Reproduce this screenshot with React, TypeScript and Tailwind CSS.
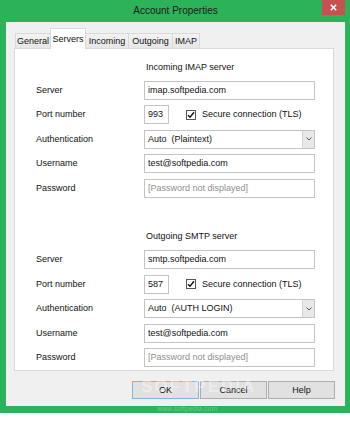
import React from "react";

const FONT = { fontFamily: '"Liberation Sans", "Noto Sans", Arial, sans-serif' };

function TextBox({ value, placeholder, w = "w-full" }: { value?: string; placeholder?: string; w?: string }) {
  return (
    <div className={`${w} h-[19px] bg-white border border-[#c2c4c8] flex items-center pl-[3px] text-[9px] leading-none`}>
      {value ? (
        <span className="text-[#111]">{value}</span>
      ) : (
        <span className="text-[#8f8f8f]">{placeholder}</span>
      )}
    </div>
  );
}

function Select({ value }: { value: string }) {
  return (
    <div className="w-full h-[19px] bg-white border border-[#c2c4c8] flex items-stretch text-[9px] leading-none">
      <div className="flex-1 flex items-center pl-[3px] text-[#111] whitespace-pre">{value}</div>
      <div className="w-[12px] border-l border-[#d4d4d4] bg-[#e8e8e8] flex items-center justify-center">
        <svg width="6" height="4" viewBox="0 0 6 4" fill="none" stroke="#555" strokeWidth="1">
          <path d="M0.5 0.5 3 3 5.5 0.5" />
        </svg>
      </div>
    </div>
  );
}

function Row({ label, children }: { label: string; children: React.ReactNode }) {
  return (
    <div className="grid grid-cols-[108px_171px] items-center h-[19px]">
      <span className="text-[9px] leading-none text-[#111]">{label}</span>
      <div className="flex items-center">{children}</div>
    </div>
  );
}

function ServerGroup({ title, host, port, auth }: { title: string; host: string; port: string; auth: string }) {
  return (
    <div className="flex flex-col gap-[5.5px]">
      <div className="grid grid-cols-[108px_171px] h-[16px] items-center">
        <span />
        <span className="pl-[2px] text-[9px] leading-none text-[#111]">{title}</span>
      </div>
      <Row label="Server">
        <TextBox value={host} />
      </Row>
      <Row label="Port number">
        <TextBox value={port} w="w-[25px]" />
        <div className="ml-[17px] w-[10px] h-[10px] border border-[#555] bg-white flex items-center justify-center">
          <svg width="8" height="8" viewBox="0 0 8 8" fill="none" stroke="#111" strokeWidth="1.4">
            <path d="M1 4.2 3 6.3 7 1.2" />
          </svg>
        </div>
        <span className="ml-[6px] text-[9px] leading-none text-[#111]">Secure connection (TLS)</span>
      </Row>
      <Row label="Authentication">
        <Select value={auth} />
      </Row>
      <Row label="Username">
        <TextBox value="test@softpedia.com" />
      </Row>
      <Row label="Password">
        <TextBox placeholder="[Password not displayed]" />
      </Row>
    </div>
  );
}

const TABS = [
  { name: "General", w: "w-[36px]" },
  { name: "Servers", w: "w-[36px]", active: true },
  { name: "Incoming", w: "w-[44px]" },
  { name: "Outgoing", w: "w-[45px]" },
  { name: "IMAP", w: "w-[28px]" },
];

export default function App() {
  return (
    <div className="w-[350px] h-[422px] bg-white" style={FONT}>
      <div className="relative w-[350px] h-[413px] bg-[#2cb35a] flex flex-col pl-[6px] pr-[5px] pb-[7px]">
        {/* Title bar */}
        <div className="relative h-[22px] flex items-center justify-center">
          <span className="text-[10px] leading-none text-[#1b1b1b]">Account Properties</span>
          <div className="absolute right-0 top-0 w-[23px] h-[15px] bg-[#c75050] flex items-center justify-center">
            <svg width="7" height="7" viewBox="0 0 7 7" stroke="#fff" strokeWidth="1.6">
              <path d="M0.8 0.8 6.2 6.2 M6.2 0.8 0.8 6.2" />
            </svg>
          </div>
        </div>

        {/* Client area */}
        <div className="flex-1 bg-[#f0f0f0] pt-[7px] pl-[8px] pr-[11px] flex flex-col">
          <div className="relative z-10 flex items-end h-[20px] -mb-px pl-[1px]">
            {TABS.map((t) =>
              t.active ? (
                <div
                  key={t.name}
                  className={`${t.w} -ml-px h-[21px] bg-white border border-b-0 border-[#d9d9d9] flex items-center justify-center text-[9px] leading-none text-[#111]`}
                >
                  {t.name}
                </div>
              ) : (
                <div
                  key={t.name}
                  className={`${t.w} -ml-px first:ml-0 h-[16px] bg-gradient-to-b from-[#f3f3f3] to-[#e6e6e6] border border-[#d9d9d9] flex items-center justify-center text-[9px] leading-none text-[#111]`}
                >
                  {t.name}
                </div>
              )
            )}
          </div>

          <div className="h-[323px] bg-white border border-[#d9d9d9] pl-[21px] pt-[10px] flex flex-col">
            <ServerGroup title="Incoming IMAP server" host="imap.softpedia.com" port="993" auth="Auto  (Plaintext)" />
            <div className="h-[31px]" />
            <ServerGroup title="Outgoing SMTP server" host="smtp.softpedia.com" port="587" auth="Auto  (AUTH LOGIN)" />
          </div>

          <div className="mt-[10px] flex justify-end gap-[1px] -mr-px">
            <button className="w-[67px] h-[18px] bg-[#e1e1e1] border border-[#7eb4ea] text-[9px] leading-none text-[#111]">
              OK
            </button>
            <button className="w-[67px] h-[18px] bg-[#e1e1e1] border border-[#adadad] text-[9px] leading-none text-[#111]">
              Cancel
            </button>
            <button className="w-[67px] h-[18px] bg-[#e1e1e1] border border-[#adadad] text-[9px] leading-none text-[#111]">
              Help
            </button>
          </div>
        </div>

        {/* Softpedia watermark */}
        <span className="absolute left-[141px] top-[378px] text-[17px] leading-none font-bold tracking-[2px] text-white/40 pointer-events-none">
          SOFTPEDIA
        </span>
        <span className="absolute left-[157px] top-[405px] text-[7px] leading-none text-white/30 pointer-events-none">
          www.softpedia.com
        </span>
      </div>
    </div>
  );
}
